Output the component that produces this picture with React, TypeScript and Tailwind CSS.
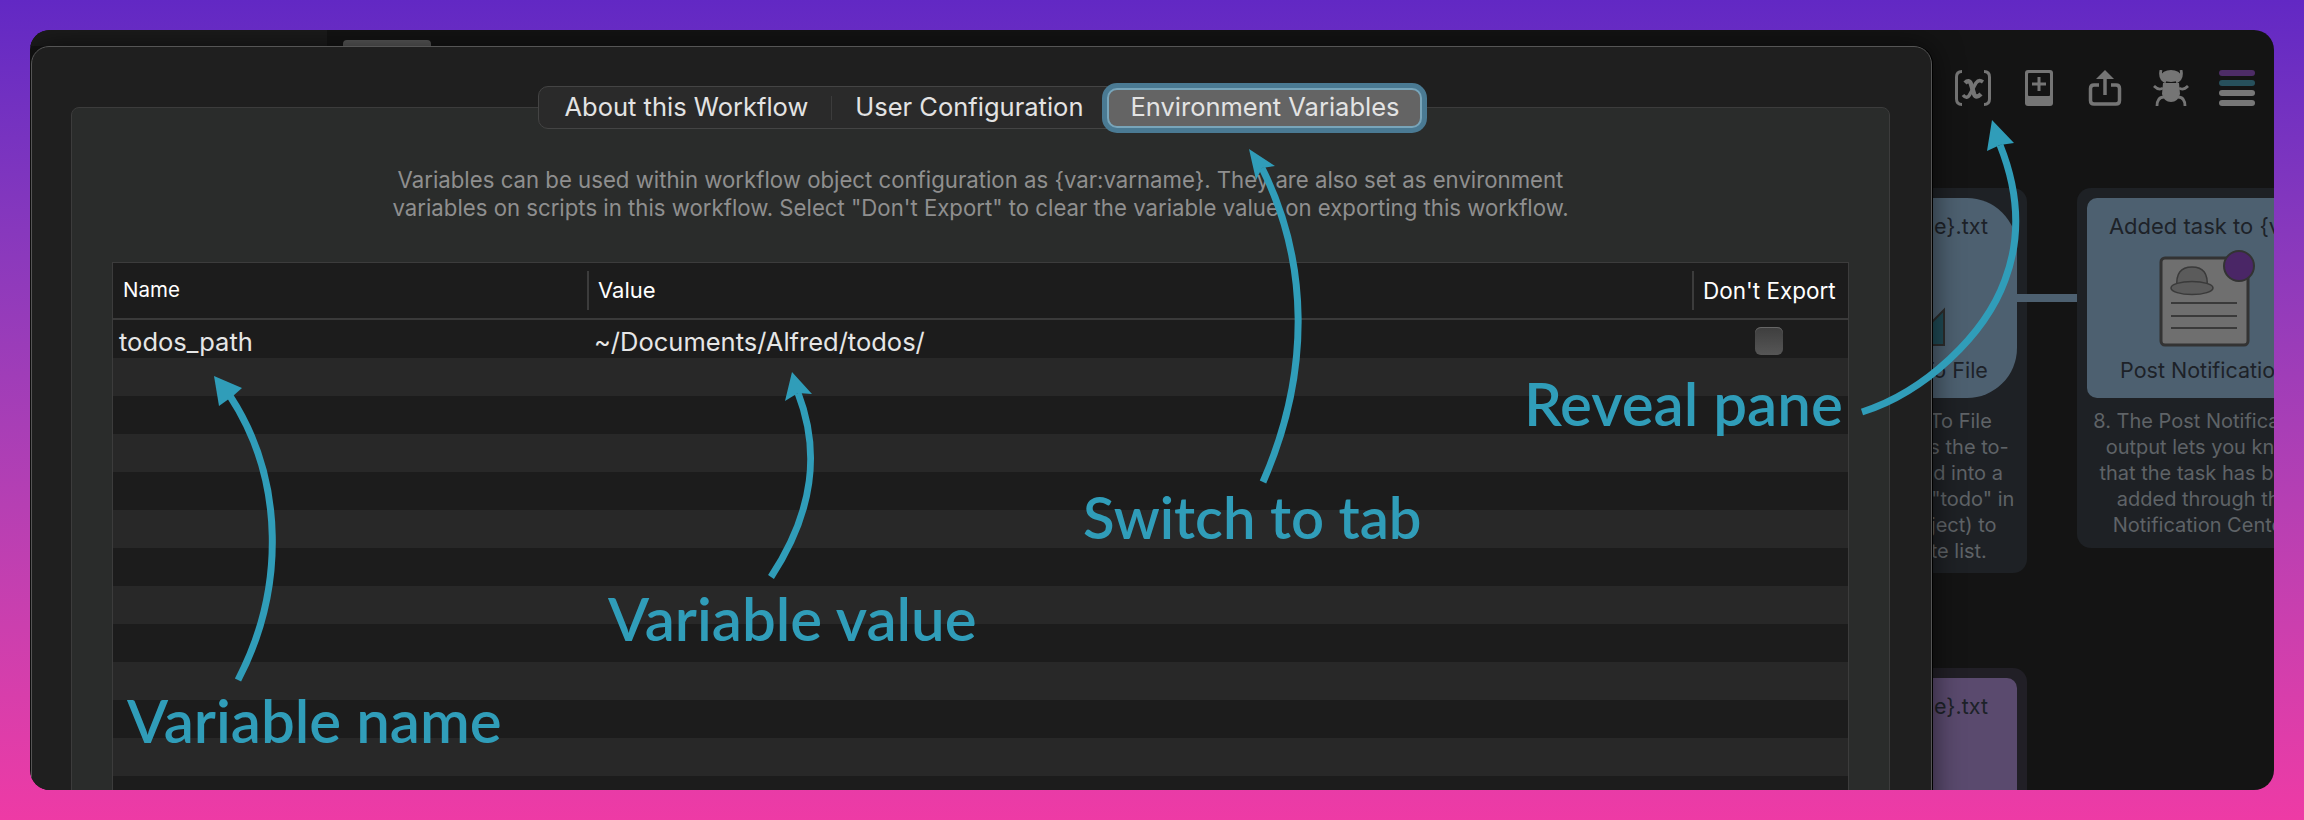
const stripes = Array.from({ length: 12 }, (_, i) => i);

const ToolbarIcons = () => (
  <div className="flex gap-[30px] pl-[23px] pt-10">
    <svg width="36" height="36" viewBox="0 0 36 36" fill="none" stroke="#757575" strokeWidth="3">
      <path d="M7 1.500Q1.500 1.500 1.500 7V29Q1.500 34.500 7 34.500" />
      <path d="M29 1.500Q34.500 1.500 34.500 7V29Q34.500 34.500 29 34.500" />
      <path d="M10 13Q14 9 16 14L19 24Q21 29 26 24" strokeWidth="4.500" />
      <path d="M28 12Q24 9 21 13L15 24Q12 30 8 25" strokeWidth="3.500" />
    </svg>
    <svg width="36" height="36" viewBox="0 0 36 36">
      <rect x="4" y="0" width="28" height="36" rx="3" fill="#757575" />
      <rect x="7" y="3" width="22" height="23" rx="1" fill="#141414" />
      <path d="M18 7V21M11 14H25" stroke="#757575" strokeWidth="3" />
    </svg>
    <svg width="36" height="36" viewBox="0 0 36 36" fill="none" stroke="#757575" strokeWidth="3.500">
      <path d="M12 15H7Q3.500 15 3.500 18.500V30.500Q3.500 34 7 34H29Q32.500 34 32.500 30.500V18.500Q32.500 15 29 15H24" />
      <path d="M18 8V25" />
      <path d="M18 0L27 9H9Z" fill="#757575" stroke="none" />
    </svg>
    <svg width="36" height="36" viewBox="0 0 36 36" fill="none" stroke="#757575" strokeWidth="2.800">
      <ellipse cx="18" cy="6" rx="10" ry="6" fill="#757575" stroke="none" />
      <path d="M8 0Q6 9 13 12M28 0Q30 9 23 12" />
      <path d="M10 13H26L27 24Q25 32 18 32Q11 32 9 24Z" fill="#757575" stroke="none" />
      <path d="M1 16Q6 21 10 18M35 16Q30 21 26 18" />
      <path d="M4 36Q4 27 11 27M32 36Q32 27 25 27" />
    </svg>
    <div className="flex w-9 flex-col gap-1">
      <div className="h-1.5 rounded-sm bg-[#4d2c66]" />
      <div className="h-1.5 rounded-sm bg-[#27505c]" />
      <div className="h-1.5 rounded-sm bg-[#777777]" />
      <div className="h-1.5 rounded-sm bg-[#777777]" />
    </div>
  </div>
);

const PostIcon = () => (
  <svg width="130" height="106" viewBox="0 0 130 106" className="mt-px shrink-0">
    <rect x="22" y="17" width="87" height="87" rx="4" fill="#6f6f6f" stroke="#333333" strokeWidth="3" />
    <path d="M38 46Q36 26 53 26Q70 26 68 46Z" fill="#5b5b5b" stroke="#3a3a3a" strokeWidth="1.500" />
    <ellipse cx="53" cy="47" rx="21" ry="6.500" fill="#5b5b5b" stroke="#3a3a3a" strokeWidth="1.500" />
    <path d="M32 62H98M32 75H98M32 87H98" stroke="#3a3a3a" strokeWidth="2" />
    <circle cx="100" cy="25" r="15" fill="#4a2666" stroke="#333333" strokeWidth="2" />
  </svg>
);

const Annotations = () => (
  <>
    <svg className="absolute left-0 top-0 z-20" width="2304" height="820" viewBox="0 0 2304 820" fill="none" stroke="#309db9" strokeWidth="7">
      <path d="M238 680C285 590 285 480 230 396" />
      <path d="M214 376L242 388L233 396L219 406Z" fill="#309db9" stroke="none" />
      <path d="M771 577C815 510 820 450 798 393" />
      <path d="M792 372L812 394L798 393L785 401Z" fill="#309db9" stroke="none" />
      <path d="M1263 482C1312 370 1308 260 1262 168" />
      <path d="M1249 149L1275 166L1262 168L1256 180Z" fill="#309db9" stroke="none" />
      <path d="M1862 412C1925 392 1985 335 2005 280C2022 235 2018 190 2000 145" />
      <path d="M1992 120L2014 143L2000 145L1987 151Z" fill="#309db9" stroke="none" />
    </svg>
    <span className="absolute left-[127px] top-[685px] z-20 text-[60px] leading-[70px] font-semibold whitespace-nowrap text-[#309db9] [font-family:Lato,sans-serif]">Variable name</span>
    <span className="absolute left-[608px] top-[583px] z-20 text-[60px] leading-[70px] font-semibold whitespace-nowrap text-[#309db9] [font-family:Lato,sans-serif]">Variable value</span>
    <span className="absolute left-[1083px] top-[482px] z-20 text-[58px] leading-[70px] font-semibold whitespace-nowrap text-[#309db9] [font-family:Lato,sans-serif]">Switch to tab</span>
    <span className="absolute left-[1524px] top-[368px] z-20 text-[60px] leading-[70px] font-semibold whitespace-nowrap text-[#309db9] [font-family:Lato,sans-serif]">Reveal pane</span>
  </>
);

export default function App() {
  return (
    <div className="relative h-[820px] w-[2304px] overflow-hidden bg-gradient-to-b from-[#6228c4] to-[#ee3aa5] px-[30px] pt-[30px] [font-family:Inter,sans-serif]">
      <div className="relative flex h-[760px] w-[2244px] overflow-hidden rounded-[20px] bg-[#141414]">
        <div className="absolute left-0 top-0 h-4 w-[297px] bg-[#1c1c1c]" />
        <div className="absolute left-[313px] top-[10px] h-[6px] w-[88px] rounded-t-sm bg-[#5a5a5a]" />

        {/* canvas nodes behind the sheet */}
        <div className="absolute left-[1743px] top-[158px] h-[385px] w-[254px] rounded-[14px] bg-[#1e2125]">
          <div className="mx-[10px] mt-[10px] flex h-[200px] flex-col items-center rounded-[50px] bg-[#4d6070] pt-[14px] text-[21.500px] leading-[28px] text-[#1d2228]">
            <span className="whitespace-nowrap">{"{var:filename}.txt"}</span>
            <svg width="90" height="106" viewBox="0 0 90 106" className="mt-px shrink-0">
              <path d="M54 104L89 104V69Z" fill="#1f4a55" stroke="#2c2c2c" strokeWidth="2" />
            </svg>
            <span className="mt-[9px] whitespace-nowrap">Write Text To File</span>
          </div>
          <p className="mt-[10px] text-center text-[20px] leading-[26px] whitespace-nowrap text-[#5f6367]">
            7. Write Text To File<br />output appends the to-<br />do item entered into a<br />text file named "todo" in<br />(from the subject) to<br />your complete list.
          </p>
        </div>
        <div className="absolute left-[1987px] top-[264px] h-2 w-[70px] bg-[#4d6070]" />
        <div className="absolute left-[2047px] top-[158px] h-[360px] w-[254px] rounded-[14px] bg-[#1e2125]">
          <div className="mx-[10px] mt-[10px] flex h-[200px] flex-col items-center rounded-[10px] bg-[#4d6070] pt-[14px] text-[21.500px] leading-[28px] text-[#1d2228]">
            <span className="ml-[12px] text-[22px] whitespace-nowrap">{"Added task to {var}"}</span>
            <PostIcon />
            <span className="mt-[9px] whitespace-nowrap">Post Notification</span>
          </div>
          <p className="mt-[10px] text-center text-[20px] leading-[26px] whitespace-nowrap text-[#5f6367]">
            8. The Post Notification<br />output lets you know<br />that the task has been<br />added through the<br />Notification Center.
          </p>
        </div>
        <div className="absolute left-[1743px] top-[638px] h-[200px] w-[254px] rounded-[14px] bg-[#211f26]">
          <div className="mx-[10px] mt-[10px] h-[200px] rounded-[10px] bg-[#5a4a6e] pt-[14px] text-center text-[21.500px] leading-[28px] text-[#1d2228]">
            {"{var:filename}.txt"}
          </div>
        </div>

        {/* config sheet */}
        <div className="relative z-10 ml-px mt-4 h-[800px] w-[1901px] shrink-0 rounded-t-[18px] border border-[#555555] bg-[#1f1f1f] pl-[39px] pr-[41px] shadow-[0_0_30px_rgba(0,0,0,0.6),1px_0_0_#000000]">
          <div className="mt-[60px] h-[800px] rounded-t-lg border border-[#3c3c3c] bg-[#2a2c2b] px-[40px]">
            <div className="-mt-[22px] flex justify-center">
              <div className="flex h-[43px] items-center rounded-[10px] border border-[#444444] bg-[#2a2a2a] text-[25.500px] whitespace-nowrap text-[#e3e3e3]">
                <span className="pl-[26px] pr-[23px]">About this Workflow</span>
                <div className="h-6 w-px bg-[#3c3c3c]" />
                <span className="pl-[23px] pr-[24px]">User Configuration</span>
                <div className="flex h-[40px] w-[315px] items-center justify-center rounded-[10px] border-2 border-[#78a5ba] bg-[#646464] shadow-[0_0_0_5px_#4a7a93]">
                  Environment Variables
                </div>
              </div>
            </div>
            <p className="mt-[37px] text-center text-[22.200px] leading-[28px] whitespace-nowrap text-[#8f8f8f]">
              Variables can be used within workflow object configuration as {"{var:varname}"}. They are also set as environment
              <br />
              variables on scripts in this workflow. Select "Don't Export" to clear the variable value on exporting this workflow.
            </p>
            <div className="mt-[40px] border border-[#3c3c3c]">
              <div className="grid h-[57px] grid-cols-[474px_1105px_1fr] items-center border-b-2 border-[#3a3a3a] bg-[#1c1c1c] text-[22px] text-white">
                <span className="pl-[10px] text-[20.500px]">Name</span>
                <span className="border-l-2 border-[#3c3c3c] py-[3px] pl-[9px]">Value</span>
                <span className="border-l-2 border-[#3c3c3c] py-[3px] pl-[9px] text-[22.500px] whitespace-nowrap">Don't Export</span>
              </div>
              <div className="grid h-[38px] grid-cols-[474px_1105px_1fr] items-center bg-[#1c1c1c] text-[25.500px] text-[#e6e6e6]">
                <span className="pl-[6px] pt-[3px]">todos_path</span>
                <span className="pl-[7px] pt-[3px]">~/Documents/Alfred/todos/</span>
                <div className="pl-[63px]">
                  <div className="h-7 w-7 rounded-md bg-gradient-to-b from-[#3e3e3e] to-[#565656] shadow-[inset_0_1px_0_#666666]" />
                </div>
              </div>
              {stripes.map((i) => (
                <div key={i} className={i % 2 === 0 ? "h-[38px] bg-[#282828]" : "h-[38px] bg-[#1c1c1c]"} />
              ))}
            </div>
          </div>
        </div>

        {/* toolbar */}
        <ToolbarIcons />
      </div>
      <Annotations />
    </div>
  );
}
